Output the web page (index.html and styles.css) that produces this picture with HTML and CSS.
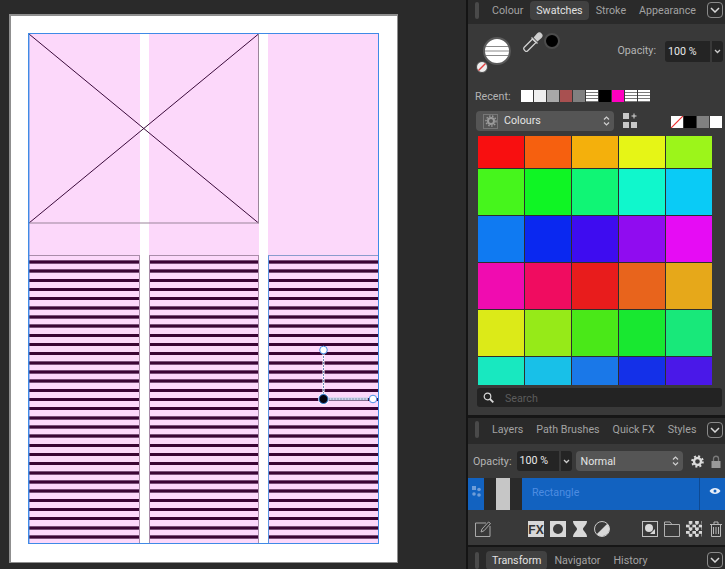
FILE: index.html
```html
<!DOCTYPE html>
<html>

<head>
    <title>Swatches</title>
    <link rel="stylesheet" href="styles.css">
</head>

<body>
    <div class="app">
        <div class="canvas">
            <div class="page">
                <div class="sheet">
                    <div class="col"><div class="pink"></div><div class="stripes"></div></div>
                    <div class="col"><div class="pink"></div><div class="stripes"></div></div>
                    <div class="col"><div class="pink"></div><div class="stripes"></div></div>

                    <svg class="frame" width="231" height="190" viewBox="0 0 231 190">
                        <path d="M0 0L229.500 189M229.500 0L0 189" stroke="#3a0a3a" stroke-width="1" fill="none" />
                        <path d="M229.500 0V189H0" stroke="#9a859a" stroke-width="1" fill="none" />
                    </svg>
                    <div class="selection"></div>
                    <svg class="handles" width="70" height="65" viewBox="0 0 70 65">
                        <path d="M15.500 7V55" stroke="#ffffff" stroke-width="2" />
                        <path d="M15.500 7V55" stroke="#6d88b8" stroke-width="1" stroke-dasharray="2 1" />
                        <path d="M20 56H60" stroke="#c8d4e8" stroke-width="3" />
                        <path d="M20 56H60" stroke="#8c94b4" stroke-width="1" stroke-dasharray="2 1" />
                        <circle cx="15.500" cy="7" r="3.800" fill="#ffffff" stroke="#4a90e8" />
                        <circle cx="65" cy="56" r="3.800" fill="#ffffff" stroke="#4a90e8" />
                        <circle cx="15.500" cy="56" r="5.500" fill="#ffffff" />
                        <circle cx="15.500" cy="56" r="4.500" fill="#050510" stroke="#2f7ad8" />
                    </svg>
                </div>
            </div>
        </div>

        <div class="panel">
            <div class="tabs">
                <span class="grip"></span>
                <span class="tab">Colour</span>
                <span class="tab active">Swatches</span>
                <span class="tab">Stroke</span>
                <span class="tab">Appearance</span>
                <span class="chev"><svg width="10" height="6" viewBox="0 0 10 6"><path d="M1 1L5 5L9 1" stroke="#d8d8d8" stroke-width="1.500" fill="none" /></svg></span>
            </div>

            <div class="swatches">
                <div class="top-row">
                    <svg class="fill-well" width="36" height="40" viewBox="0 0 36 40">
                        <circle cx="21" cy="18" r="13" fill="#ffffff" stroke="#5a5a5a" stroke-width="2" />
                        <path d="M10 13.500H32M9 18H33M10 22.500H32" stroke="#8a8a8a" stroke-width="1" />
                        <circle cx="6" cy="34" r="5.500" fill="#eeeeee" stroke="#4a4a4a" />
                        <path d="M2.500 37.500L9.500 30.500" stroke="#e04040" stroke-width="1.500" />
                    </svg>
                    <svg class="picker" width="20" height="20" viewBox="0 0 20 20">
                        <path d="M1 15.500L9.500 7L13 10.500L4.500 19C3.500 20 2.500 19.500 1.800 18.500C0.800 17.500 0.300 16.500 1 15.500Z" fill="none" stroke="#d0d0d0" stroke-width="1.300" />
                        <path d="M8.500 5.500L14.500 11.500M11.500 5.500L14.500 2C17 -0.500 20.500 3 18 5.500L14.500 8.500Z" fill="#d0d0d0" stroke="#d0d0d0" stroke-width="1.300" />
                    </svg>
                    <span class="black-dot"></span>
                    <span class="label opacity-label">Opacity:</span>
                    <span class="field">100 %</span>
                    <span class="field-arrow"><svg width="7" height="5" viewBox="0 0 7 5"><path d="M1 1L3.500 3.500L6 1" stroke="#cccccc" stroke-width="1.300" fill="none" /></svg></span>
                </div>

                <div class="recent-row">
                    <span class="label recent-label">Recent:</span>
                    <span class="chip white"></span>
                    <span class="chip offwhite"></span>
                    <span class="chip grey"></span>
                    <span class="chip brick"></span>
                    <span class="chip midgrey"></span>
                    <span class="chip lined"></span>
                    <span class="chip black"></span>
                    <span class="chip magenta"></span>
                    <span class="chip lined"></span>
                    <span class="chip lined"></span>
                </div>

                <div class="palette-row">
                    <div class="select colours-select">
                        <span class="gear-box">
                            <svg width="12" height="12" viewBox="0 0 12 12"><circle cx="6" cy="6" r="3" fill="none" stroke="#9a9a9a" stroke-width="2" /><circle cx="6" cy="6" r="5" fill="none" stroke="#9a9a9a" stroke-width="1.500" stroke-dasharray="1.500 1.500" /></svg>
                        </span>
                        <span class="select-text">Colours</span>
                        <svg class="updown" width="7" height="12" viewBox="0 0 7 12"><path d="M1 4.500L3.500 2L6 4.500M1 7.500L3.500 10L6 7.500" stroke="#d0d0d0" stroke-width="1.200" fill="none" /></svg>
                    </div>
                    <svg class="add-grid" width="15" height="15" viewBox="0 0 15 15">
                        <rect x="0" y="0" width="6" height="6" fill="#c8c8c8" />
                        <rect x="0" y="9" width="6" height="6" fill="#c8c8c8" />
                        <rect x="8" y="9" width="6" height="6" fill="#c8c8c8" />
                        <path d="M11 0.500V5.500M8.500 3H13.500" stroke="#d8d8d8" stroke-width="1" />
                    </svg>
                    <div class="mini-chips">
                        <svg class="chip" width="12" height="12" viewBox="0 0 12 12"><rect width="12" height="12" fill="#ffffff" /><path d="M0 12L12 0" stroke="#f03030" stroke-width="1.200" /></svg>
                        <span class="chip black"></span>
                        <span class="chip midgrey"></span>
                        <span class="chip white"></span>
                    </div>
                </div>

                <div class="swatch-grid">
                    <div></div><div></div><div></div><div></div><div></div>
                    <div></div><div></div><div></div><div></div><div></div>
                    <div></div><div></div><div></div><div></div><div></div>
                    <div></div><div></div><div></div><div></div><div></div>
                    <div></div><div></div><div></div><div></div><div></div>
                    <div></div><div></div><div></div><div></div><div></div>
                </div>

                <div class="search">
                    <svg width="11" height="11" viewBox="0 0 11 11"><circle cx="4.500" cy="4.500" r="3.300" fill="none" stroke="#d8d8d8" stroke-width="1.200" /><path d="M7 7L10.300 10.300" stroke="#d8d8d8" stroke-width="1.800" /></svg>
                    <span class="search-text">Search</span>
                </div>
            </div>

            <div class="tabs tabs-layers">
                <span class="grip"></span>
                <span class="tab">Layers</span>
                <span class="tab">Path Brushes</span>
                <span class="tab">Quick FX</span>
                <span class="tab">Styles</span>
                <span class="chev"><svg width="10" height="6" viewBox="0 0 10 6"><path d="M1 1L5 5L9 1" stroke="#d8d8d8" stroke-width="1.500" fill="none" /></svg></span>
            </div>

            <div class="layer-controls">
                <span class="label">Opacity:</span>
                <span class="field field-small">100 %</span>
                <span class="field-arrow arrow-small"><svg width="7" height="5" viewBox="0 0 7 5"><path d="M1 1L3.500 3.500L6 1" stroke="#cccccc" stroke-width="1.300" fill="none" /></svg></span>
                <div class="select blend-select">
                    <span class="select-text">Normal</span>
                    <svg class="updown" width="7" height="12" viewBox="0 0 7 12"><path d="M1 4.500L3.500 2L6 4.500M1 7.500L3.500 10L6 7.500" stroke="#d0d0d0" stroke-width="1.200" fill="none" /></svg>
                </div>
                <svg class="gear" width="13" height="13" viewBox="0 0 13 13"><circle cx="6.500" cy="6.500" r="3.500" fill="none" stroke="#dcdcdc" stroke-width="2.400" /><circle cx="6.500" cy="6.500" r="5.300" fill="none" stroke="#dcdcdc" stroke-width="2" stroke-dasharray="2 2.160" /></svg>
                <svg class="lock" width="10" height="13" viewBox="0 0 10 13"><path d="M2.500 6V3.500C2.500 0.500 7.500 0.500 7.500 3.500V6" fill="none" stroke="#7a7a7a" stroke-width="1.300" /><rect x="0.500" y="6" width="9" height="7" fill="#9a9a9a" /></svg>
            </div>

            <div class="layer-row">
                <span class="layer-dots">
                    <svg width="9" height="11" viewBox="0 0 9 11"><rect x="0" y="0" width="4" height="4" fill="#6f9dd8" /><circle cx="7" cy="3.500" r="1.800" fill="#6f9dd8" /><circle cx="2" cy="8" r="1.800" fill="#6f9dd8" /><circle cx="7" cy="9" r="1.800" fill="#6f9dd8" /></svg>
                </span>
                <span class="layer-thumb"><span class="thumb-fill"></span></span>
                <span class="layer-name">Rectangle</span>
                <span class="layer-eye">
                    <svg width="12" height="8" viewBox="0 0 12 8"><path d="M0.500 4C3 0 9 0 11.500 4C9 8 3 8 0.500 4Z" fill="#e8eef8" /><circle cx="6" cy="4" r="1.500" fill="#1262c0" /></svg>
                </span>
            </div>

            <div class="tool-row">
                <svg class="tool" width="16" height="16" viewBox="0 0 16 16"><path d="M15 5V15.500H0.500V2H11" fill="none" stroke="#a8a8a8" /><path d="M6 11L7 8L13.500 1L15.500 2.500L9 9.800Z" fill="none" stroke="#a8a8a8" /></svg>
                <div class="tool-group first-group">
                    <svg class="tool" width="16" height="16" viewBox="0 0 16 16"><rect width="16" height="16" fill="#d8d8d8" /><text x="8" y="13" class="fx-text" text-anchor="middle">FX</text></svg>
                    <svg class="tool" width="16" height="16" viewBox="0 0 16 16"><rect width="16" height="16" fill="#d8d8d8" /><circle cx="8" cy="8" r="5" fill="#3a3a3a" /></svg>
                    <svg class="tool" width="16" height="16" viewBox="0 0 16 16"><path d="M1 0H15C15 4 11 6 11 8C11 10 15 12 15 16H1C1 12 5 10 5 8C5 6 1 4 1 0Z" fill="#d8d8d8" /></svg>
                    <svg class="tool" width="16" height="16" viewBox="0 0 16 16"><circle cx="8" cy="8" r="7.500" fill="none" stroke="#c8c8c8" /><path d="M13.300 2.700A7.500 7.500 0 0 1 2.700 13.300Z" fill="#d8d8d8" /></svg>
                </div>
                <div class="tool-group second-group">
                    <svg class="tool" width="16" height="16" viewBox="0 0 16 16"><rect x="0.500" y="0.500" width="15" height="15" fill="none" stroke="#c0c0c0" /><circle cx="7" cy="7" r="4" fill="#d8d8d8" /><path d="M8 13L13 8V13Z" fill="#d8d8d8" /></svg>
                    <svg class="tool" width="16" height="16" viewBox="0 0 16 16"><path d="M0.500 15.500V1H6L8 3.500H15.500V15.500ZM0.500 3.500H8" fill="none" stroke="#b0b0b0" /></svg>
                    <div class="checker"></div>
                    <svg class="tool" width="16" height="16" viewBox="0 0 16 16"><path d="M2 3.500H14M6 3.500V1H10V3.500M3.500 3.500V15.500H12.500V3.500M5.500 6V13M8 6V13M10.500 6V13" fill="none" stroke="#b8b8b8" /></svg>
                </div>
            </div>

            <div class="tabs tabs-transform">
                <span class="grip"></span>
                <span class="tab active">Transform</span>
                <span class="tab">Navigator</span>
                <span class="tab">History</span>
                <span class="chev"><svg width="10" height="6" viewBox="0 0 10 6"><path d="M1 1L5 5L9 1" stroke="#d8d8d8" stroke-width="1.500" fill="none" /></svg></span>
            </div>
        </div>
    </div>
</body>

</html>
```

FILE: styles.css
```css
html,
body {
    margin: 0;
    padding: 0;
    background-color: #2a2a2a;
}

body {
    font-family: "Roboto", "Liberation Sans", sans-serif;
    font-size: 10.700px;
    color: #c8c8c8;
}

.app {
    display: flex;
    width: 725px;
    height: 569px;
    overflow: hidden;
}

/* canvas side */
.canvas {
    width: 466px;
    flex-shrink: 0;
    padding: 14px 0 0 9px;
    box-sizing: border-box;
    background-color: #2a2a2a;
}

.page {
    width: 389px;
    height: 549px;
    box-sizing: border-box;
    padding: 18px 0 0 18px;
    background-color: #ffffff;
    border-style: solid;
    border-color: #8f8f8f;
    border-width: 2px 1px 1px 2px;
}

.sheet {
    position: relative;
    display: grid;
    grid-template-columns: 110.500px 110.500px 110.500px;
    column-gap: 9px;
    width: 350px;
    height: 509px;
}

.col {
    display: flex;
    flex-direction: column;
}

.pink {
    height: 221px;
    background-color: #fcd8fa;
}

.stripes {
    flex: 1;
    box-sizing: border-box;
    border: 1px solid #a98ca9;
    border-bottom: none;
    background-color: #fcd8fa;
    background-image: repeating-linear-gradient(to bottom,
            #fcd8fa 0, #fcd8fa 4.170px,
            #7a4f78 4.170px, #7a4f78 4.670px,
            #3a0434 4.670px, #3a0434 7.170px,
            #7a4f78 7.170px, #7a4f78 7.670px,
            #fcd8fa 7.670px, #fcd8fa 9.170px);
}

.col:first-of-type .stripes {
    border-left: none;
}

.col:nth-of-type(3) .stripes {
    border-left-color: #5a94e0;
    border-top-color: #8a9ccc;
    border-right: none;
}

.frame {
    position: absolute;
    left: 0;
    top: 0;
}

.selection {
    position: absolute;
    left: -1px;
    top: -1px;
    width: 349px;
    height: 509px;
    border: 1px solid #3f8ae6;
    box-shadow: inset 1px 0 0 rgba(74, 144, 226, 0.45);
}

.handles {
    position: absolute;
    left: 279px;
    top: 309px;
}

/* panel side */
.panel {
    width: 259px;
    flex-shrink: 0;
    display: flex;
    flex-direction: column;
    background-color: #393939;
    border-left: 2px solid #141414;
    box-sizing: border-box;
}

.tabs {
    display: flex;
    align-items: center;
    height: 24px;
    flex-shrink: 0;
    gap: 13px;
    padding: 0 0 3px 7px;
    box-sizing: border-box;
    background-color: #2a2a2a;
    position: relative;
}

.grip {
    width: 4px;
    height: 17px;
    border-radius: 2px;
    background-color: #4a4a4a;
}

.tab {
    color: #a2a2a2;
    white-space: nowrap;
}

.tab.active {
    color: #e2e2e2;
    background-color: #414141;
    border-radius: 4px;
    padding: 3px 6px;
    margin: 0 -6px;
}

.chev {
    position: absolute;
    right: 2px;
    top: 2px;
    width: 14px;
    height: 14px;
    display: flex;
    align-items: center;
    justify-content: center;
    border: 1px solid #8a8a8a;
    border-radius: 4px;
}

.swatches {
    height: 394px;
    flex-shrink: 0;
    box-sizing: border-box;
    padding-left: 8px;
    border-bottom: 3px solid #161616;
}

.top-row {
    display: flex;
    height: 42px;
    align-items: flex-start;
    position: relative;
}

.fill-well {
    margin: 9px 0 0 0;
}

.picker {
    margin: 8px 0 0 11px;
}

.black-dot {
    width: 16px;
    height: 16px;
    margin: 9px 0 0 1px;
    border-radius: 50%;
    background-color: #000000;
    border: 2px solid #4c4c4c;
    box-sizing: border-box;
}

.label {
    color: #b4b4b4;
    white-space: nowrap;
}

.opacity-label {
    margin: 20px 0 0 auto;
}

.field {
    display: block;
    width: 45px;
    height: 21px;
    line-height: 21px;
    margin: 17px 0 0 9px;
    padding-left: 3px;
    box-sizing: border-box;
    background-color: #242424;
    border-radius: 3px 0 0 3px;
    color: #eaeaea;
}

.field-arrow {
    display: flex;
    align-items: center;
    justify-content: center;
    width: 11px;
    height: 21px;
    margin: 17px 2px 0 2px;
    background-color: #242424;
    border-radius: 0 3px 3px 0;
}

.recent-row {
    display: flex;
    align-items: center;
    gap: 1px;
    height: 12px;
    margin-top: 24px;
}

.recent-label {
    width: 45px;
    margin-left: -1px;
}

.chip {
    display: block;
    width: 12px;
    height: 12px;
    flex-shrink: 0;
}

.white { background-color: #ffffff; }
.offwhite { background-color: #efefef; }
.grey { background-color: #a8a8a8; }
.brick { background-color: #a85050; }
.midgrey { background-color: #808080; }
.black { background-color: #000000; }
.magenta { background-color: #ff00c0; }

.lined {
    background-color: #ffffff;
    background-image: repeating-linear-gradient(to bottom, #ffffff 0, #ffffff 2px, #7a7a7a 2px, #7a7a7a 3px);
}

.palette-row {
    display: flex;
    height: 25px;
    margin-top: 9px;
    align-items: flex-start;
}

.select {
    display: flex;
    align-items: center;
    box-sizing: border-box;
    background-color: #555555;
    border-radius: 4px;
    color: #e4e4e4;
}

.colours-select {
    width: 138px;
    height: 20px;
    padding-left: 7px;
}

.gear-box {
    display: flex;
    align-items: center;
    justify-content: center;
    width: 15px;
    height: 15px;
    border: 1px solid #777777;
    box-sizing: border-box;
    margin-right: 6px;
}

.select-text {
    flex: 1;
}

.colours-select .select-text {
    padding-bottom: 1px;
}

.updown {
    margin-right: 4px;
}

.add-grid {
    margin: 2px 0 0 9px;
}

.mini-chips {
    display: flex;
    gap: 1px;
    margin: 5px 0 0 33px;
}

.swatch-grid {
    display: grid;
    grid-template-columns: repeat(5, 46px);
    grid-template-rows: 32px 46px 46px 46px 46px 28px;
    gap: 1px;
    width: 234px;
    margin-left: 2px;
    background-color: #2e2e2e;
}

.swatch-grid div:nth-child(1) { background-color: #f80f10; }
.swatch-grid div:nth-child(2) { background-color: #f6600f; }
.swatch-grid div:nth-child(3) { background-color: #f4b00c; }
.swatch-grid div:nth-child(4) { background-color: #e6f516; }
.swatch-grid div:nth-child(5) { background-color: #9cf51a; }
.swatch-grid div:nth-child(6) { background-color: #46f51c; }
.swatch-grid div:nth-child(7) { background-color: #0ff524; }
.swatch-grid div:nth-child(8) { background-color: #10f575; }
.swatch-grid div:nth-child(9) { background-color: #10f7cc; }
.swatch-grid div:nth-child(10) { background-color: #0acbf6; }
.swatch-grid div:nth-child(11) { background-color: #0f7af2; }
.swatch-grid div:nth-child(12) { background-color: #0a28f0; }
.swatch-grid div:nth-child(13) { background-color: #3e0cf0; }
.swatch-grid div:nth-child(14) { background-color: #900cf0; }
.swatch-grid div:nth-child(15) { background-color: #e60cf4; }
.swatch-grid div:nth-child(16) { background-color: #f00cb0; }
.swatch-grid div:nth-child(17) { background-color: #f00c60; }
.swatch-grid div:nth-child(18) { background-color: #e81c1c; }
.swatch-grid div:nth-child(19) { background-color: #e8641c; }
.swatch-grid div:nth-child(20) { background-color: #e6a81a; }
.swatch-grid div:nth-child(21) { background-color: #dcea18; }
.swatch-grid div:nth-child(22) { background-color: #96ea18; }
.swatch-grid div:nth-child(23) { background-color: #4ae818; }
.swatch-grid div:nth-child(24) { background-color: #18e830; }
.swatch-grid div:nth-child(25) { background-color: #18e87a; }
.swatch-grid div:nth-child(26) { background-color: #18e8c0; }
.swatch-grid div:nth-child(27) { background-color: #18c0e8; }
.swatch-grid div:nth-child(28) { background-color: #1a78e8; }
.swatch-grid div:nth-child(29) { background-color: #1430e8; }
.swatch-grid div:nth-child(30) { background-color: #4a18e8; }

.search {
    display: flex;
    align-items: center;
    gap: 11px;
    width: 245px;
    height: 19px;
    margin: 3px 0 0 1px;
    padding-left: 6px;
    box-sizing: border-box;
    background-color: #232323;
    border-radius: 3px;
}

.search-text {
    padding-top: 1px;
    color: #5c5c5c;
}

.tabs-layers {
    height: 26px;
}

.tabs-layers .chev {
    top: 4px;
}

.layer-controls {
    display: flex;
    align-items: center;
    height: 34px;
    flex-shrink: 0;
    padding-left: 5px;
    box-sizing: border-box;
}

.field-small {
    width: 42px;
    height: 20px;
    line-height: 20px;
    margin: 0 0 0 5px;
}

.arrow-small {
    height: 20px;
    margin: 0 0 0 2px;
}

.blend-select {
    width: 107px;
    height: 20px;
    margin-left: 4px;
    padding-left: 5px;
}

.gear {
    margin-left: 8px;
}

.lock {
    margin-left: 7px;
}

.layer-row {
    display: flex;
    height: 32px;
    flex-shrink: 0;
    background-color: #1262c0;
}

.layer-dots {
    display: flex;
    width: 16px;
    padding: 8px 0 0 4px;
    box-sizing: border-box;
}

.layer-thumb {
    display: flex;
    justify-content: center;
    width: 38px;
    background-color: #2a2a2a;
    box-sizing: border-box;
}

.thumb-fill {
    width: 14px;
    background-color: #c6c6c6;
}

.layer-name {
    flex: 1;
    padding-left: 10px;
    line-height: 29px;
    color: #4d8ce0;
}

.layer-eye {
    display: flex;
    align-items: center;
    justify-content: center;
    width: 26px;
    padding: 0 0 6px 4px;
    box-sizing: border-box;
    border-left: 1px solid #0d4a94;
}

.tool-row {
    display: flex;
    align-items: center;
    height: 35px;
    flex-shrink: 0;
    padding: 3px 0 0 7px;
    box-sizing: border-box;
}

.tool {
    display: block;
    flex-shrink: 0;
}

.fx-text {
    font-family: "Liberation Sans", sans-serif;
    font-size: 12px;
    font-weight: bold;
    fill: #333333;
}

.tool-group {
    display: flex;
    gap: 6px;
}

.first-group {
    margin-left: 37px;
}

.second-group {
    margin-left: 32px;
}

.checker {
    width: 16px;
    height: 16px;
    background-color: #393939;
    background-image: repeating-conic-gradient(#d8d8d8 0 25%, #393939 0 50%);
    background-size: 6.400px 6.400px;
}

.tabs-transform {
    height: 24px;
    border-top: 2px solid #161616;
    padding: 4px 0 0 7px;
}

.tabs-transform .chev {
    top: 5px;
}
```
